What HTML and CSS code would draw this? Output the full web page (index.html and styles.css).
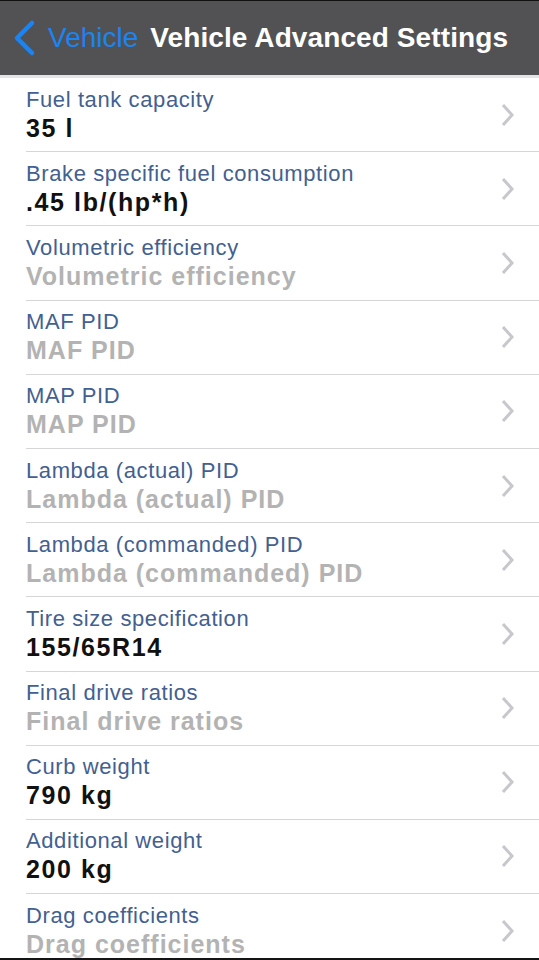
FILE: index.html
```html
<!DOCTYPE html>
<html lang="en">
<head>
  <meta charset="UTF-8" />
  <title>Vehicle Advanced Settings</title>
  <meta name="viewport" content="width=device-width, initial-scale=1.0"/>
  <link rel="stylesheet" href="styles.css">
</head>
<body>
  <div class="screen">

    <!-- Navigation Bar -->
    <div class="navbar">
      <a class="back" href="#">
        <svg class="backArrow" width="24" height="38" viewBox="0 0 24 38">
          <path d="M20 4 L5 19 L20 34" fill="none" stroke="#1a84f2" stroke-width="4.5" stroke-linecap="round" stroke-linejoin="round"/>
        </svg>
        <span>Vehicle</span>
      </a>
      <h1 class="title">Vehicle Advanced Settings</h1>
    </div>
    <div class="navShadow"></div>

    <!-- Settings List -->
    <ul class="settings">
      <li class="row">
        <div class="text">
          <div class="label">Fuel tank capacity</div>
          <div class="value">35 l</div>
        </div>
        <svg class="chevron" width="14" height="24" viewBox="0 0 14 24"><path d="M3 2 L12 12 L3 22" fill="none" stroke="#c7c7cc" stroke-width="3"/></svg>
      </li>
      <li class="row">
        <div class="text">
          <div class="label">Brake specific fuel consumption</div>
          <div class="value">.45 lb/(hp*h)</div>
        </div>
        <svg class="chevron" width="14" height="24" viewBox="0 0 14 24"><path d="M3 2 L12 12 L3 22" fill="none" stroke="#c7c7cc" stroke-width="3"/></svg>
      </li>
      <li class="row">
        <div class="text">
          <div class="label">Volumetric efficiency</div>
          <div class="value empty">Volumetric efficiency</div>
        </div>
        <svg class="chevron" width="14" height="24" viewBox="0 0 14 24"><path d="M3 2 L12 12 L3 22" fill="none" stroke="#c7c7cc" stroke-width="3"/></svg>
      </li>
      <li class="row">
        <div class="text">
          <div class="label">MAF PID</div>
          <div class="value empty">MAF PID</div>
        </div>
        <svg class="chevron" width="14" height="24" viewBox="0 0 14 24"><path d="M3 2 L12 12 L3 22" fill="none" stroke="#c7c7cc" stroke-width="3"/></svg>
      </li>
      <li class="row">
        <div class="text">
          <div class="label">MAP PID</div>
          <div class="value empty">MAP PID</div>
        </div>
        <svg class="chevron" width="14" height="24" viewBox="0 0 14 24"><path d="M3 2 L12 12 L3 22" fill="none" stroke="#c7c7cc" stroke-width="3"/></svg>
      </li>
      <li class="row">
        <div class="text">
          <div class="label">Lambda (actual) PID</div>
          <div class="value empty">Lambda (actual) PID</div>
        </div>
        <svg class="chevron" width="14" height="24" viewBox="0 0 14 24"><path d="M3 2 L12 12 L3 22" fill="none" stroke="#c7c7cc" stroke-width="3"/></svg>
      </li>
      <li class="row">
        <div class="text">
          <div class="label">Lambda (commanded) PID</div>
          <div class="value empty">Lambda (commanded) PID</div>
        </div>
        <svg class="chevron" width="14" height="24" viewBox="0 0 14 24"><path d="M3 2 L12 12 L3 22" fill="none" stroke="#c7c7cc" stroke-width="3"/></svg>
      </li>
      <li class="row">
        <div class="text">
          <div class="label">Tire size specification</div>
          <div class="value">155/65R14</div>
        </div>
        <svg class="chevron" width="14" height="24" viewBox="0 0 14 24"><path d="M3 2 L12 12 L3 22" fill="none" stroke="#c7c7cc" stroke-width="3"/></svg>
      </li>
      <li class="row">
        <div class="text">
          <div class="label">Final drive ratios</div>
          <div class="value empty">Final drive ratios</div>
        </div>
        <svg class="chevron" width="14" height="24" viewBox="0 0 14 24"><path d="M3 2 L12 12 L3 22" fill="none" stroke="#c7c7cc" stroke-width="3"/></svg>
      </li>
      <li class="row">
        <div class="text">
          <div class="label">Curb weight</div>
          <div class="value">790 kg</div>
        </div>
        <svg class="chevron" width="14" height="24" viewBox="0 0 14 24"><path d="M3 2 L12 12 L3 22" fill="none" stroke="#c7c7cc" stroke-width="3"/></svg>
      </li>
      <li class="row">
        <div class="text">
          <div class="label">Additional weight</div>
          <div class="value">200 kg</div>
        </div>
        <svg class="chevron" width="14" height="24" viewBox="0 0 14 24"><path d="M3 2 L12 12 L3 22" fill="none" stroke="#c7c7cc" stroke-width="3"/></svg>
      </li>
      <li class="row">
        <div class="text">
          <div class="label">Drag coefficients</div>
          <div class="value empty">Drag coefficients</div>
        </div>
        <svg class="chevron" width="14" height="24" viewBox="0 0 14 24"><path d="M3 2 L12 12 L3 22" fill="none" stroke="#c7c7cc" stroke-width="3"/></svg>
      </li>
    </ul>

  </div>
</body>
</html>
```

FILE: styles.css
```css
* {
  box-sizing: border-box;
}

body {
  margin: 0;
  font-family: 'Liberation Sans', Arial, sans-serif;
  background: #ffffff;
}

.screen {
  width: 539px;
  height: 960px;
  overflow: hidden;
  border-bottom: 2px solid #141414;
  background: #ffffff;
}

/* Navigation Bar */
.navbar {
  height: 75px;
  background: #525254;
  border-top: 1px solid #111111;
  display: flex;
  align-items: center;
  padding-left: 12px;
}

.back {
  display: flex;
  align-items: center;
  text-decoration: none;
  color: #1a84f2;
  font-size: 28px;
}

.backArrow {
  margin-right: 12px;
}

.title {
  margin: 0 0 0 12px;
  color: #ffffff;
  font-size: 28px;
  font-weight: bold;
  letter-spacing: 0.1px;
  white-space: nowrap;
}

.navShadow {
  height: 3px;
  background: #e4e4e6;
}

/* Settings List */
.settings {
  list-style: none;
  margin: 0;
  padding: 0;
}

.row {
  height: 74.2px;
  margin-left: 26px;
  padding-right: 25px;
  border-bottom: 1px solid #d6d6d8;
  display: flex;
  align-items: center;
}

.text {
  flex: 1;
}

.label {
  color: #43608f;
  font-size: 22px;
  line-height: 26px;
  letter-spacing: 0.6px;
}

.value {
  color: #111111;
  font-size: 25px;
  font-weight: bold;
  line-height: 30px;
  letter-spacing: 1.6px;
}

.value.empty {
  color: #b3b3b3;
  letter-spacing: 1px;
}

.chevron {
  flex-shrink: 0;
}
```
